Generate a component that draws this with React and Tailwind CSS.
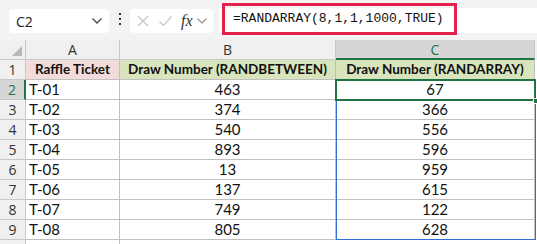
import React from "react";

const rows = [
  ["T-01", 463, 67],
  ["T-02", 374, 366],
  ["T-03", 540, 556],
  ["T-04", 893, 596],
  ["T-05", 13, 959],
  ["T-06", 137, 615],
  ["T-07", 749, 122],
  ["T-08", 805, 628],
];

const uiFont = { fontFamily: "'Open Sans', 'Noto Sans', sans-serif" };
const cellFont = { fontFamily: "Lato, 'Noto Sans', sans-serif" };

const Chevron = ({ className }) => (
  <svg width="12" height="8" viewBox="0 0 12 8" className={className}>
    <path d="M1.5 1.5 L6 6 L10.5 1.5" fill="none" stroke="currentColor" strokeWidth="1.3" />
  </svg>
);

const Toolbar = () => (
  <div className="h-[40px] bg-[#f3f3f3] flex items-start relative" style={uiFont}>
    <div className="mt-[9px] ml-[9px] w-[100px] h-[24px] bg-white rounded-[4px] flex items-center justify-between pl-[7px] pr-[6px] text-[14px] text-[#222]">
      <span>C2</span>
      <Chevron className="text-[#444]" />
    </div>
    <div className="mt-[13px] ml-[10px] w-[2px] flex flex-col gap-[3px]">
      <div className="w-[2px] h-[2px] bg-[#333]" />
      <div className="w-[2px] h-[2px] bg-[#333]" />
      <div className="w-[2px] h-[2px] bg-[#333]" />
    </div>
    <div className="mt-[9px] ml-[9px] w-[83px] h-[24px] bg-white rounded-[4px] flex items-center pl-[6px] gap-[8px] text-[#c4c4c4]">
      <svg width="14" height="14" viewBox="0 0 14 14">
        <path d="M2 2 L12 12 M12 2 L2 12" stroke="currentColor" strokeWidth="1.2" />
      </svg>
      <svg width="15" height="14" viewBox="0 0 15 14">
        <path d="M1.5 7.5 L5.5 11.5 L13.5 2.5" fill="none" stroke="currentColor" strokeWidth="1.2" />
      </svg>
      <span className="italic text-[#333] text-[16px] leading-none" style={{ fontFamily: "'Liberation Serif', serif" }}>fx</span>
      <Chevron className="text-[#999] -ml-[5px]" />
    </div>
    <div className="mt-[8px] ml-[6px] flex-1 h-[25px] bg-white" />
    <div className="absolute left-[222px] top-[3px] w-[235px] h-[32px] border-[3px] border-[#e3224f] flex items-center pl-[8px] text-[13px] text-[#111] whitespace-nowrap" style={{ fontFamily: "'Liberation Mono', monospace" }}>
      =RANDARRAY(8,1,1,1000,TRUE)
    </div>
  </div>
);

export default function App() {
  return (
    <div className="w-[537px] h-[244px] bg-white overflow-hidden">
      <Toolbar />
      {/* column headers */}
      <div className="flex h-[20px] text-[14px] text-[#333] bg-[#f0f0f0]" style={uiFont}>
        <div className="w-[26px] border-r border-b border-[#c8c8c8] relative">
          <svg width="10" height="10" viewBox="0 0 10 10" className="absolute right-[3px] bottom-[3px]">
            <path d="M10 0 L10 10 L0 10 Z" fill="#b8b8b8" />
          </svg>
        </div>
        <div className="w-[94px] border-r border-b border-[#c8c8c8] flex items-center justify-center">A</div>
        <div className="w-[216px] border-r border-b border-[#c8c8c8] flex items-center justify-center">B</div>
        <div className="w-[199px] border-r border-b-2 border-r-[#c8c8c8] border-b-[#217346] bg-[#d6d6d6] flex items-center justify-center text-[#217346]">C</div>
      </div>
      {/* header row */}
      <div className="flex h-[20px] text-[13.5px] whitespace-nowrap" style={cellFont}>
        <div className="w-[26px] bg-[#f0f0f0] border-r border-b border-[#c8c8c8] flex items-center justify-center text-[#333] text-[14px] font-normal" style={uiFont}>1</div>
        <div className="w-[94px] bg-[#f2dcdb] border-r border-b border-[#c0c0c0] flex items-center justify-center font-bold text-[#111]">Raffle Ticket</div>
        <div className="w-[216px] bg-[#d8e4bc] border-r border-b border-[#c0c0c0] flex items-center justify-center font-bold text-[#111]">Draw Number (RANDBETWEEN)</div>
        <div className="w-[199px] bg-[#d8e4bc] border-r border-b border-[#c0c0c0] flex items-center justify-center font-bold text-[#111]">Draw Number (RANDARRAY)</div>
      </div>
      <div className="relative">
        {rows.map(([t, b, c], i) => (
          <div key={t} className="flex h-[20px] text-[15px] text-[#111] whitespace-nowrap" style={cellFont}>
            <div
              className={
                i === 0
                  ? "w-[26px] bg-[#d6d6d6] border-r-2 border-b border-r-[#217346] border-b-[#c8c8c8] flex items-center justify-center text-[#217346] text-[14px]"
                  : "w-[26px] bg-[#f0f0f0] border-r border-b border-[#c8c8c8] flex items-center justify-center text-[#333] text-[14px]"
              }
              style={uiFont}
            >
              {i + 2}
            </div>
            <div className="w-[94px] border-r border-b border-[#c0c0c0] flex items-center pl-[3px]">{t}</div>
            <div className="w-[216px] border-r border-b border-[#c0c0c0] flex items-center justify-center">{b}</div>
            <div className="w-[199px] border-r border-b border-[#c0c0c0] flex items-center justify-center">{c}</div>
          </div>
        ))}
        <div className="h-[10px] flex">
          <div className="w-[26px] bg-[#f0f0f0] border-r border-[#c8c8c8]" />
          <div className="w-[94px] border-r border-[#c0c0c0]" />
        </div>
        {/* spill range */}
        <div className="absolute left-[336px] top-0 w-[200px] h-[160px] border border-[#2f6fd6] pointer-events-none" />
        {/* active cell */}
        <div className="absolute left-[335px] top-[-1px] w-[201px] h-[22px] border-2 border-[#217346] pointer-events-none">
          <div className="absolute right-[-5px] bottom-[-5px] w-[6px] h-[6px] bg-[#217346] border border-white" />
        </div>
      </div>
    </div>
  );
}
